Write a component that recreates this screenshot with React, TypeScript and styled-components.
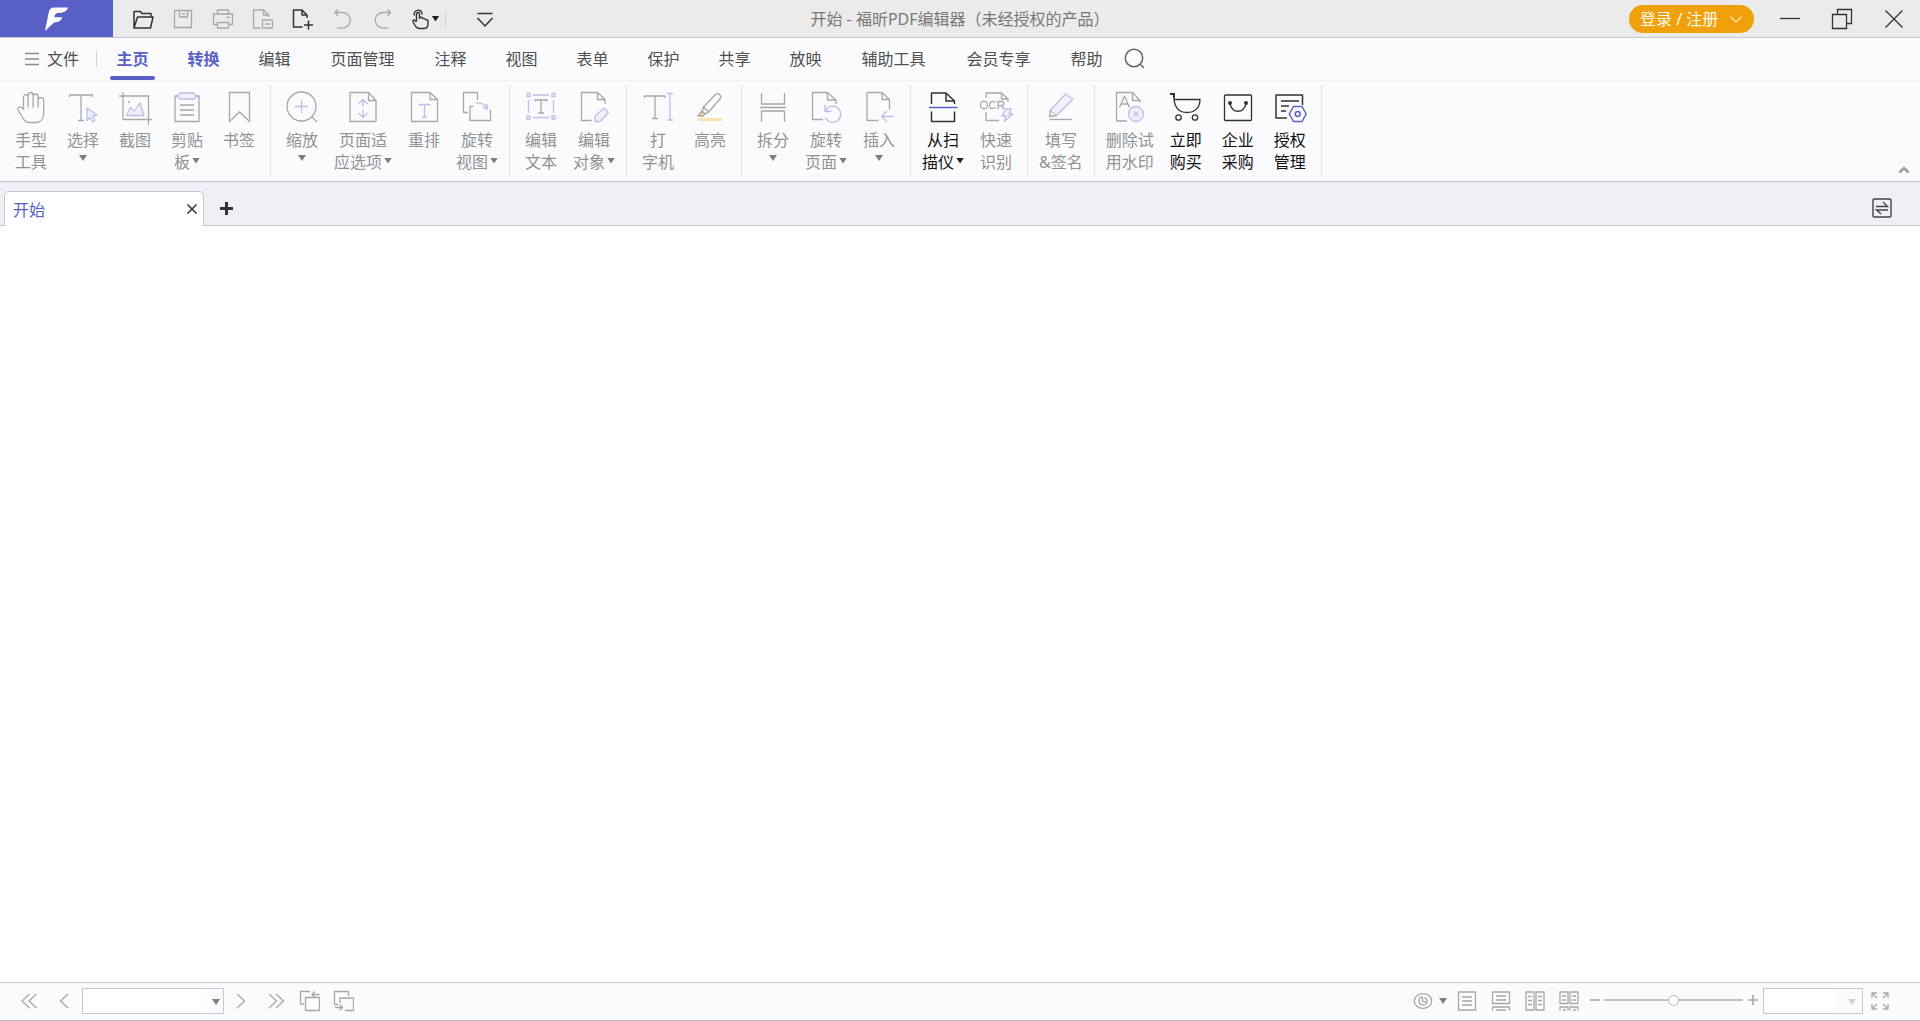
import React from "react";
import styled, { createGlobalStyle } from "styled-components";

const GRAY = "#a8a8a8";
const LILAC = "#bdbfe8";
const PALE = "#f0f0fb";
const DARK = "#333333";
const BRAND = "#5860c8";
const LINE = "#c5c8d4";

const GlobalStyle = createGlobalStyle`
  *, *::before, *::after { box-sizing: border-box; }
  body {
    margin: 0;
    background: #ffffff;
    font-family: "Noto Sans", "Noto Sans CJK SC", sans-serif;
    font-size: 16px;
    line-height: 22px;
  }
  button, select, input { font: inherit; color: inherit; }
  button { border: 0; padding: 0; background: none; cursor: pointer; }
  svg { display: block; flex: none; }
`;

const Shell = styled.div`
  display: flex;
  flex-direction: column;
  min-height: 100vh;
`;

/* Title bar */
const TitleBar = styled.header`
  display: grid;
  grid-template-columns: 1fr auto 1fr;
  align-items: center;
  height: 38px;
  background: #ebebeb;
  border-bottom: 1px solid #c8c8d6;
`;

const TitleSide = styled.div<{ $end?: boolean }>`
  display: flex;
  align-items: center;
  align-self: stretch;
  justify-content: ${(p) => (p.$end ? "flex-end" : "flex-start")};
`;

const Logo = styled.div`
  display: flex;
  align-items: center;
  justify-content: center;
  align-self: stretch;
  width: 113px;
  margin-right: 10px;
  background: ${BRAND};
`;

const QuickButton = styled.button<{ $width?: number }>`
  display: flex;
  align-items: center;
  justify-content: center;
  gap: 1px;
  width: ${(p) => p.$width ?? 40}px;
  height: 36px;
`;

const Separator = styled.span<{ $gap?: number }>`
  width: 1px;
  height: 16px;
  background: #d0d0d6;
  margin-right: ${(p) => p.$gap ?? 0}px;
`;

const Title = styled.h1`
  margin: 0;
  font-size: 16px;
  font-weight: 400;
  color: #787878;
`;

const Login = styled.button`
  display: flex;
  align-items: center;
  justify-content: space-between;
  width: 125px;
  height: 28px;
  margin-right: 10px;
  padding: 0 12px 0 11px;
  border-radius: 14px;
  background: #f0a00a;
  color: #fffbf0;
`;

const WindowButton = styled.button`
  display: flex;
  align-items: center;
  justify-content: center;
  width: 52px;
  height: 36px;
`;

/* Menu */
const Menu = styled.nav`
  display: flex;
  align-items: center;
  height: 43px;
  background: #fbfbfe;
  border-bottom: 1px solid #f1f1f5;
`;

const FileButton = styled.button`
  display: flex;
  align-items: center;
  gap: 7px;
  width: 72px;
  margin-left: 24px;
  color: #505050;
`;

const MenuItem = styled.button<{ $wide?: boolean; $tone?: "active" | "accent" }>`
  position: relative;
  align-self: stretch;
  width: ${(p) => (p.$wide ? 105 : 71)}px;
  color: ${(p) => (p.$tone ? BRAND : "#505050")};
  font-weight: ${(p) => (p.$tone ? 700 : 400)};
  &::after {
    content: "";
    display: ${(p) => (p.$tone === "active" ? "block" : "none")};
    position: absolute;
    left: 13px;
    right: 13px;
    bottom: 0;
    height: 4px;
    border-radius: 2px;
    background: ${BRAND};
  }
`;

const SearchButton = styled.button`
  display: flex;
  padding: 0 2px;
`;

/* Ribbon */
const Ribbon = styled.div`
  display: flex;
  padding: 4px 6px 5px 0;
  background: #fbfbfe;
  border-bottom: 1px solid ${LINE};
`;

const Group = styled.div`
  display: flex;
  padding: 0 5px;
  border-right: 1px solid #e3e3ea;
`;

const Tool = styled.button<{ $enabled?: boolean }>`
  display: flex;
  flex-direction: column;
  align-items: center;
  min-width: 52px;
  padding: 6px 6px 3px;
  color: ${(p) => (p.$enabled ? "#111111" : "#929292")};
`;

const ToolLabel = styled.span`
  display: flex;
  flex-direction: column;
  align-items: center;
  height: 48px;
  padding-top: 4px;
  white-space: nowrap;
`;

const ToolLine = styled.span`
  display: flex;
  align-items: center;
  gap: 2px;
`;

const Caret = styled.span<{ $color?: string }>`
  width: 8px;
  height: 6px;
  background: ${(p) => p.$color ?? "#7d7d7d"};
  clip-path: polygon(0 0, 100% 0, 50% 100%);
`;

const LineCaret = styled(Caret)`
  margin-bottom: 3px;
`;

const SoloCaret = styled(Caret)`
  margin-top: 4px;
`;

const Collapse = styled.button`
  display: flex;
  align-items: center;
  justify-content: center;
  align-self: flex-end;
  width: 20px;
  height: 12px;
  margin-left: auto;
`;

/* Document tabs */
const TabBar = styled.div`
  display: flex;
  align-items: flex-end;
  height: 44px;
  padding: 0 28px 0 4px;
  background: #eff0f5;
  box-shadow: inset 0 -1px 0 ${LINE};
`;

const Tab = styled.div`
  display: flex;
  align-items: center;
  justify-content: space-between;
  width: 200px;
  height: 35px;
  padding: 0 5px 0 8px;
  background: #ffffff;
  border: 1px solid ${LINE};
  border-bottom: 0;
  border-radius: 5px 5px 0 0;
`;

const TabName = styled.button`
  flex: 1;
  height: 34px;
  padding-top: 2px;
  text-align: left;
  color: ${BRAND};
`;

const TabAction = styled.button`
  display: flex;
`;

const SwitchTabs = styled(TabAction)`
  margin: 0 0 8px auto;
`;

const NewTab = styled.button`
  display: flex;
  align-items: center;
  height: 36px;
  padding: 0 16px;
`;

const Workspace = styled.main`
  flex: 1;
  background: #ffffff;
`;

/* Status bar */
const StatusBar = styled.footer`
  display: flex;
  align-items: center;
  justify-content: space-between;
  height: 39px;
  padding: 0 23px 1px 12px;
  background: #fbfbfe;
  border-top: 1px solid ${LINE};
  border-bottom: 1px solid #b4b8c0;
`;

const StatusGroup = styled.div`
  display: flex;
  align-items: center;
`;

const StatusButton = styled.button<{ $width?: number }>`
  display: flex;
  align-items: center;
  justify-content: center;
  gap: 6px;
  width: ${(p) => p.$width ?? 34}px;
  height: 26px;
`;

const SelectBox = styled.label<{ $width: number; $gap?: number }>`
  position: relative;
  width: ${(p) => p.$width}px;
  height: 26px;
  margin-left: ${(p) => p.$gap ?? 0}px;
  select {
    appearance: none;
    display: block;
    width: 100%;
    height: 26px;
    padding: 0 20px 0 6px;
    border: 1px solid ${LINE};
    border-radius: 0;
    background: linear-gradient(to left, #fbfbfe 16px, #ffffff 16px);
    outline: none;
  }
  ${Caret} {
    position: absolute;
    right: 4px;
    top: 11px;
    pointer-events: none;
  }
`;

const WideSelectBox = styled(SelectBox)`
  select {
    background: linear-gradient(to left, #fbfbfe 24px, #ffffff 24px);
  }
  ${Caret} {
    right: 7px;
  }
`;

const Zoom = styled.input`
  appearance: none;
  width: 139px;
  height: 12px;
  margin: 0 0 2px;
  background: linear-gradient(#c3c3c3, #c3c3c3) center / 100% 2px no-repeat;
  &::-webkit-slider-thumb {
    appearance: none;
    width: 11px;
    height: 11px;
    border: 1px solid #b8b8b8;
    border-radius: 50%;
    background: #ffffff;
  }
`;

type IconProps = { size?: number; color?: string; width?: number; children: React.ReactNode };

const Icon = ({ size = 34, color = GRAY, width = 1.3, children }: IconProps) => (
  <svg
    width={size}
    height={size}
    viewBox={`0 0 ${size} ${size}`}
    fill="none"
    stroke={color}
    strokeWidth={width}
    strokeLinejoin="round"
    aria-hidden="true"
  >
    {children}
  </svg>
);

const tools = {
  hand: (
    <Icon>
      <path d="M9.500 18.500V6a2.300 2.300 0 0 1 4.600 0v10.500M14.100 6V4a2.500 2.500 0 0 1 5 0v12.500M19.100 5.500a2.400 2.400 0 0 1 5 0v11M24.100 9.500a2.800 2.800 0 0 1 5.600 0V22c0 6-3.200 9.500-8.200 9.500h-6c-3 0-5-1.500-6.500-4.500l-5-8c-1-2.500 1.500-4 3.500-2.500l2 2" />
    </Icon>
  ),
  select: (
    <Icon>
      <path d="M3.500 6V4h23v2M15 4v25.500M12 29.500h6" />
      <path d="M21 17l10 7-4.500 1 2.500 4.500-2.500 1.500-2.500-4.500-3 3z" stroke={LILAC} fill={PALE} />
    </Icon>
  ),
  snapshot: (
    <Icon>
      <path d="M1 5h29.500v29M5 1v27.500h29.500" />
      <circle cx="11" cy="11" r="1" fill={GRAY} stroke="none" />
      <path d="M8.500 24.500l4-8 4 3.500 5.500-8 4 12.500z" stroke={LILAC} fill={PALE} />
    </Icon>
  ),
  clipboard: (
    <Icon>
      <path d="M9 5H5v25.500h24V5h-4M10 14h14M10 19h14M10 24h14" />
      <path d="M9 3.500Q9 2 11 2h12q2 0 2 1.500l1 2q0 2.500-3 2.500H11q-3 0-3-2.500z" stroke={LILAC} fill={PALE} />
    </Icon>
  ),
  bookmark: (
    <Icon>
      <path d="M7.500 1.500h20v29l-10-9.500-10 9.500z" strokeLinejoin="miter" />
    </Icon>
  ),
  zoom: (
    <Icon>
      <circle cx="16.500" cy="15.500" r="14.500" />
      <path d="M27 26l5 5" />
      <path d="M16.500 9v13M10 15.500h13" stroke={LILAC} width="2" />
    </Icon>
  ),
  fit: (
    <Icon>
      <path d="M4 1.500h18.500L30 9.500v21H4zM22.500 1.500v8H30" />
      <path d="M17 8.500v7.500M17 19v7.500M12.500 13L17 8.500l4.500 4.500M12.500 22l4.500 4.500 4.500-4.500" stroke={LILAC} />
    </Icon>
  ),
  reflow: (
    <Icon>
      <path d="M4.500 1.500H23l7.500 7v22h-26zM23 1.500v7h7.500" />
      <path d="M12.500 15v-1.500h10V15M17.500 13.500V26M15 26h5" stroke={LILAC} />
    </Icon>
  ),
  rotateView: (
    <Icon>
      <path d="M8 21.500H3.500v-20h14v7.500M13.500 15.500H10v14h20.500V19" />
      <path d="M16 12c6-.5 10 1.500 11 6.500M22.500 16l4.500 2.500V13" stroke={LILAC} />
    </Icon>
  ),
  editText: (
    <Icon>
      <path d="M11 10.500V9h12v1.500M17 9v13M14 22h6" />
      <path d="M3 2.500h3v3H3zM28 2.500h3v3h-3zM3 25h3v3H3zM28 25h3v3h-3zM9 4h16M9 26.500h16M4.500 9v13M29.500 9v13" stroke={LILAC} strokeLinejoin="miter" />
    </Icon>
  ),
  editObject: (
    <Icon>
      <path d="M14.500 29.500h-10v-28h16L28 8.500V13M20.500 1.500v7H28" />
      <path d="M18 25l9-8 4.500 4.500-8.500 9H18z" stroke={LILAC} fill={PALE} />
    </Icon>
  ),
  typewriter: (
    <Icon>
      <path d="M3.500 7V5H24v2M14 5v22.500M11 27.500h6" />
      <path d="M26 2.500h6M29 2.500v26.500M26 29h6" stroke={LILAC} />
    </Icon>
  ),
  highlight: (
    <Icon>
      <path d="M10.500 16L23 3q2.500-1 4.500 1.500 1 2-.5 3.500L15.500 21zM10.500 16L9 20l3 3 3.500-2" />
      <path d="M9 20l-4 5h5l2-2z" fill="#f6dca2" />
      <path d="M6 28.500h22" stroke="#f8e2ae" strokeWidth="3" strokeLinecap="round" />
    </Icon>
  ),
  split: (
    <Icon>
      <path d="M5.500 2v11h23V2M5.500 31V20h23v11M4 16.500h26" />
    </Icon>
  ),
  rotatePage: (
    <Icon>
      <path d="M14 28.500H3.500v-27h15L27 9v4M18.500 1.500V9H27" />
      <path d="M16 14v6.500h6.500M16.500 20a8 8 0 1 1 0 6.500" stroke={LILAC} />
    </Icon>
  ),
  insert: (
    <Icon>
      <path d="M16.500 29.500H5v-28h15l7.500 7v10M20 1.500v7h7.500" />
      <path d="M31.500 25.500h-12M25 20l-5.500 5.500L25 31" stroke={LILAC} />
    </Icon>
  ),
  scanner: (
    <Icon color={DARK} width={1.5}>
      <path d="M5.500 13V2H20l8.500 8v3M20 2v8h8.500M5.500 20.500v10h23v-10" />
      <path d="M3 16.500h28.500" stroke={BRAND} />
    </Icon>
  ),
  ocr: (
    <Icon>
      <path d="M7 7V2h15.500L29 8v3M22.500 2v6H29M7 21v8.500h13" />
      <ellipse cx="5" cy="14" rx="3.500" ry="3.800" />
      <path d="M16.500 11.500q-5.500-3-6 2.500 0 5.500 6 2.500M19 18v-7.500h4q2 .5 2 2t-2 2.200h-4M22.500 15l2.500 3" />
      <path d="M26.500 18h6L30 23h3.500l-8 7.500 1.500-5.500h-4z" stroke={LILAC} fill={PALE} />
    </Icon>
  ),
  sign: (
    <Icon>
      <path d="M5.500 28.500h22.500" />
      <path d="M6 19.500L21.500 3q1 0 2 1.500L29 8 12.500 24.500z" stroke={LILAC} fill={PALE} />
      <path d="M6.500 19L5.500 25.500l7-1" />
    </Icon>
  ),
  watermark: (
    <Icon>
      <path d="M14 30H3.500V1.500h16L27 9.500v2M19.500 1.500v8H27M6.500 16.500L11.500 5l5 11.500M8 13h7" />
      <circle cx="23" cy="23" r="7.500" stroke={LILAC} fill={PALE} />
      <path d="M20.500 20.500l5 5M25.500 20.500l-5 5" stroke={LILAC} />
    </Icon>
  ),
  cart: (
    <Icon color={DARK}>
      <path d="M1 3h4v5.500M5 8.500h26c0 9-6 13-13 13S6 17 5 8.500z" />
      <path d="M1 3h4v4" strokeWidth="2" strokeLinejoin="miter" />
      <circle cx="9.500" cy="26.500" r="2.700" />
      <circle cx="26" cy="26.500" r="2.700" />
    </Icon>
  ),
  bag: (
    <Icon color={DARK}>
      <rect x="3.500" y="4" width="27" height="25.500" rx="1" />
      <path d="M9 12c1 11 15 11 16 0" />
      <circle cx="9" cy="12" r="1.300" fill={DARK} />
      <circle cx="25" cy="12" r="1.300" fill={DARK} />
    </Icon>
  ),
  license: (
    <Icon color={DARK} width={1.500}>
      <path d="M14 27H3V4h26.500v10M8 10h18M8 15h8M8 20h5" />
      <path d="M20.500 15.500H29l4.200 7.500-4.200 7.500h-8.500L16.300 23z" stroke={BRAND} fill="#fbfbfe" />
      <circle cx="24.700" cy="23" r="2.400" stroke={BRAND} />
    </Icon>
  ),
};

type ToolSpec = { icon: keyof typeof tools; lines: string[]; caret?: boolean; on?: boolean };

const ribbon: ToolSpec[][] = [
  [
    { icon: "hand", lines: ["手型", "工具"] },
    { icon: "select", lines: ["选择"], caret: true },
    { icon: "snapshot", lines: ["截图"] },
    { icon: "clipboard", lines: ["剪贴", "板"], caret: true },
    { icon: "bookmark", lines: ["书签"] },
  ],
  [
    { icon: "zoom", lines: ["缩放"], caret: true },
    { icon: "fit", lines: ["页面适", "应选项"], caret: true },
    { icon: "reflow", lines: ["重排"] },
    { icon: "rotateView", lines: ["旋转", "视图"], caret: true },
  ],
  [
    { icon: "editText", lines: ["编辑", "文本"] },
    { icon: "editObject", lines: ["编辑", "对象"], caret: true },
  ],
  [
    { icon: "typewriter", lines: ["打", "字机"] },
    { icon: "highlight", lines: ["高亮"] },
  ],
  [
    { icon: "split", lines: ["拆分"], caret: true },
    { icon: "rotatePage", lines: ["旋转", "页面"], caret: true },
    { icon: "insert", lines: ["插入"], caret: true },
  ],
  [
    { icon: "scanner", lines: ["从扫", "描仪"], caret: true, on: true },
    { icon: "ocr", lines: ["快速", "识别"] },
  ],
  [{ icon: "sign", lines: ["填写", "&签名"] }],
  [
    { icon: "watermark", lines: ["删除试", "用水印"] },
    { icon: "cart", lines: ["立即", "购买"], on: true },
    { icon: "bag", lines: ["企业", "采购"], on: true },
    { icon: "license", lines: ["授权", "管理"], on: true },
  ],
];

const menu = ["主页", "转换", "编辑", "页面管理", "注释", "视图", "表单", "保护", "共享", "放映", "辅助工具", "会员专享", "帮助"];

const quick: { label: string; dark?: boolean; art: React.ReactNode }[] = [
  { label: "打开", dark: true, art: <path d="M2 20V3.500h6.500L10 5.500h9v4M2 20L5.500 9h15.500L18.500 20z" /> },
  { label: "保存", art: <path d="M2.500 2.500h17v17h-17zM7.500 2.500v6.500h8V2.500M10 6h3" /> },
  { label: "打印", art: <path d="M5.500 6V2h11v4M5.500 16.500h-4V6h19v10.500h-4M5.500 14.500h11V20h-11zM14.500 9.500h3" /> },
  { label: "打印预览", art: <path d="M8.500 20h-7V2h10l5 5v2M11.500 2v5h5M10.500 12h10v8h-10zM13 16h5" /> },
  { label: "新建", dark: true, art: <path d="M10.500 19h-9V2h8.500l5 5v3M10 2v5h5M16.500 12.500v9M12 17h9" /> },
  { label: "撤销", art: <path d="M3 4.500h7.500a7.800 7.800 0 0 1 0 15.600H5M6 1.500l-3 3L6 8" /> },
  { label: "重做", art: <path d="M18.500 4.500H11a7.800 7.800 0 0 0 0 15.600h5.500M15.500 1.500l3 3-3 3.500" /> },
];

const App = () => (
  <Shell>
    <GlobalStyle />
    <TitleBar>
      <TitleSide>
        <Logo>
          <svg width="24" height="24" viewBox="0 0 24 24" fill="#ffffff" aria-hidden="true">
            <path d="M23 .5H9.500C6 .5 4.300 2.300 3.700 5.500L0 24l8-7.500c.8-1 1.700-1.300 3-1.300 3.500-.2 5.300-2 6.200-5h-8c.4-2.700 1.600-4 4-4.200C18 5.800 21.500 5 23 .5z" />
          </svg>
        </Logo>
        {quick.map((q) => (
          <QuickButton key={q.label} aria-label={q.label}>
            <Icon size={22} color={q.dark ? DARK : GRAY} width={q.dark ? 1.5 : 1.3}>{q.art}</Icon>
          </QuickButton>
        ))}
        <QuickButton $width={42} aria-label="触摸模式">
          <Icon size={22} color={DARK} width={1.4}>
            <path d="M5.500 7.500C3 2 13.500-.5 13 6.500" />
            <path d="M7.500 13V6a1.500 1.500 0 0 1 3 0v5M10.500 9.500q2.500-1 3 1 2.500-.5 3 1 2.500 0 2.500 2v2.500c0 3-1.500 4.500-4 4.500h-4c-3 0-4-1-5-3l-2-3.500c-.5-2 1-2.500 2-1.500l1.500 1.500" />
          </Icon>
          <Caret $color="#222222" />
        </QuickButton>
        <Separator $gap={19} />
        <QuickButton aria-label="自定义快速访问工具栏">
          <Icon size={22} color={DARK} width={1.5}>
            <path d="M3.500 5.500h15M3.500 10l7.500 8 7.500-8" />
          </Icon>
        </QuickButton>
      </TitleSide>
      <Title>开始 - 福昕PDF编辑器（未经授权的产品）</Title>
      <TitleSide $end>
        <Login>
          登录 / 注册
          <Icon size={12} color="#ffe6b0" width={1.2}>
            <path d="M.5 3.500L6 9l5.500-5.500" />
          </Icon>
        </Login>
        <WindowButton aria-label="最小化">
          <Icon size={22} color={DARK}><path d="M1 10.500h20" /></Icon>
        </WindowButton>
        <WindowButton aria-label="还原">
          <Icon size={22} color={DARK}>
            <path d="M1.500 6.500h14v14h-14zM6.500 6.500v-5h14v14h-5" strokeLinejoin="miter" />
          </Icon>
        </WindowButton>
        <WindowButton aria-label="关闭">
          <Icon size={22} color={DARK}><path d="M2.500 2.500l17 17M19.500 2.500l-17 17" /></Icon>
        </WindowButton>
      </TitleSide>
    </TitleBar>

    <Menu>
      <FileButton>
        <Icon size={16} color="#8a8a8a" width={1.5}><path d="M1 2.500h14M1 8h14M1 13.500h14" /></Icon>
        文件
      </FileButton>
      <Separator />
      {menu.map((name, i) => (
        <MenuItem key={name} $wide={name.length > 2} $tone={i === 0 ? "active" : i === 1 ? "accent" : undefined}>
          {name}
        </MenuItem>
      ))}
      <SearchButton aria-label="搜索">
        <Icon size={22} color="#666666" width={1.500}>
          <circle cx="10" cy="10" r="8.700" />
          <path d="M16 16l4 4" />
        </Icon>
      </SearchButton>
    </Menu>

    <Ribbon>
      {ribbon.map((group, g) => (
        <Group key={g}>
          {group.map((tool) => {
            const tint = tool.on ? "#222222" : undefined;
            return (
              <Tool key={tool.icon} $enabled={tool.on}>
                {tools[tool.icon]}
                <ToolLabel>
                  {tool.lines.map((line, i) => (
                    <ToolLine key={line}>
                      {line}
                      {tool.caret && i === 1 && <LineCaret $color={tint} />}
                    </ToolLine>
                  ))}
                  {tool.caret && tool.lines.length === 1 && <SoloCaret $color={tint} />}
                </ToolLabel>
              </Tool>
            );
          })}
        </Group>
      ))}
      <Collapse aria-label="折叠功能区">
        <Icon size={12} color="#a0a0a0" width={2.600}><path d="M1.500 8.500L6 4l4.500 4.500" strokeLinejoin="miter" /></Icon>
      </Collapse>
    </Ribbon>

    <TabBar>
      <Tab>
        <TabName>开始</TabName>
        <TabAction aria-label="关闭标签">
          <Icon size={12} color={DARK} width={1.500}><path d="M1.500 1.500l9 9M10.500 1.500l-9 9" /></Icon>
        </TabAction>
      </Tab>
      <NewTab aria-label="新建标签">
        <Icon size={13} color={DARK} width={3}><path d="M6.500 0v13M0 6.500h13" /></Icon>
      </NewTab>
      <SwitchTabs aria-label="切换标签">
        <Icon size={20} color="#444444" width={1.400}>
          <rect x="1" y="1" width="18" height="18" rx="1" />
          <path d="M4 8.500h11.500L11 4M16 12H4.500L9 16" strokeLinejoin="miter" />
        </Icon>
      </SwitchTabs>
    </TabBar>

    <Workspace />

    <StatusBar>
      <StatusGroup>
        <StatusButton aria-label="第一页">
          <Icon size={20}><path d="M10.500 3l-7.500 7 7.500 7M17.500 3L10 10l7.500 7" /></Icon>
        </StatusButton>
        <StatusButton aria-label="上一页">
          <Icon size={20}><path d="M15 3l-7.500 7 7.500 7" /></Icon>
        </StatusButton>
        <SelectBox $width={142} $gap={2}>
          <select aria-label="页码"><option></option></select>
          <Caret />
        </SelectBox>
        <StatusButton aria-label="下一页">
          <Icon size={20}><path d="M6 3l7.500 7L6 17" /></Icon>
        </StatusButton>
        <StatusButton aria-label="最后一页">
          <Icon size={20}><path d="M4 3l7.500 7L4 17M11 3l7.500 7-7.500 7" /></Icon>
        </StatusButton>
        <StatusButton aria-label="上一视图">
          <Icon size={22}><path d="M6 14H2.500V1.500h9.500M21.500 4.500H14M17 1.500l-3 3 3 3M7.500 7.500h14v13h-14z" /></Icon>
        </StatusButton>
        <StatusButton aria-label="下一视图">
          <Icon size={22}><path d="M6 14.500H2.500v-13h14V6M8 13V8h13.500v12.500H13M3 17.500h7.500M7.500 14.500l3 3-3 3" /></Icon>
        </StatusButton>
      </StatusGroup>
      <StatusGroup>
        <StatusButton $width={40} aria-label="阅读模式">
          <Icon size={20}>
            <ellipse cx="10" cy="10" rx="8.700" ry="7.300" />
            <path d="M9.500 6a4 4 0 1 0 4.500 4.500c0-2-1-3.500-2.500-4.200" />
            <path d="M9.500 6v3.500q.5 2 4 1.500" />
          </Icon>
          <Caret />
        </StatusButton>
        <StatusButton aria-label="单页">
          <Icon size={20}><path d="M1.500 1h17v18h-17zM5 6h10M5 10h10M5 14h10" /></Icon>
        </StatusButton>
        <StatusButton aria-label="连续">
          <Icon size={20}><path d="M1.500 1h17v11.500h-17zM5 5h10M5 9h10M1.500 19.500V16h17v3.500M5 19h10" /></Icon>
        </StatusButton>
        <StatusButton aria-label="双页">
          <Icon size={20}><path d="M1 1h8v18H1zM11 1h8v18h-8zM3 5.500h4M3 9.500h4M3 13.500h4M13 5.500h4M13 9.500h4M13 13.500h4" /></Icon>
        </StatusButton>
        <StatusButton aria-label="连续双页">
          <Icon size={20}><path d="M1 1h8v11.500H1zM11 1h8v11.500h-8zM3 5h4M3 9h4M13 5h4M13 9h4M1 19.500V16h8v3.500M11 19.500V16h8v3.500M4 19h3M14 19h3" /></Icon>
        </StatusButton>
        <StatusButton $width={18} aria-label="缩小">
          <Icon size={12} width={2} color="#b8b8b8"><path d="M1 5h10" /></Icon>
        </StatusButton>
        <Zoom type="range" min={0} max={100} defaultValue={50} aria-label="缩放比例" />
        <StatusButton $width={20} aria-label="放大">
          <Icon size={12} width={2} color="#b8b8b8"><path d="M1 5h10M6 0v10" /></Icon>
        </StatusButton>
        <WideSelectBox $width={100}>
          <select aria-label="缩放级别"><option></option></select>
          <Caret $color="#d4d4d4" />
        </WideSelectBox>
        <StatusButton aria-label="全屏">
          <Icon size={20}>
            <path d="M2 7V2h5M2 2l5 5M18 7V2h-5M18 2l-5 5M2 13v5h5M2 18l5-5M18 13v5h-5M18 18l-5-5" />
          </Icon>
        </StatusButton>
      </StatusGroup>
    </StatusBar>
  </Shell>
);

export default App;
